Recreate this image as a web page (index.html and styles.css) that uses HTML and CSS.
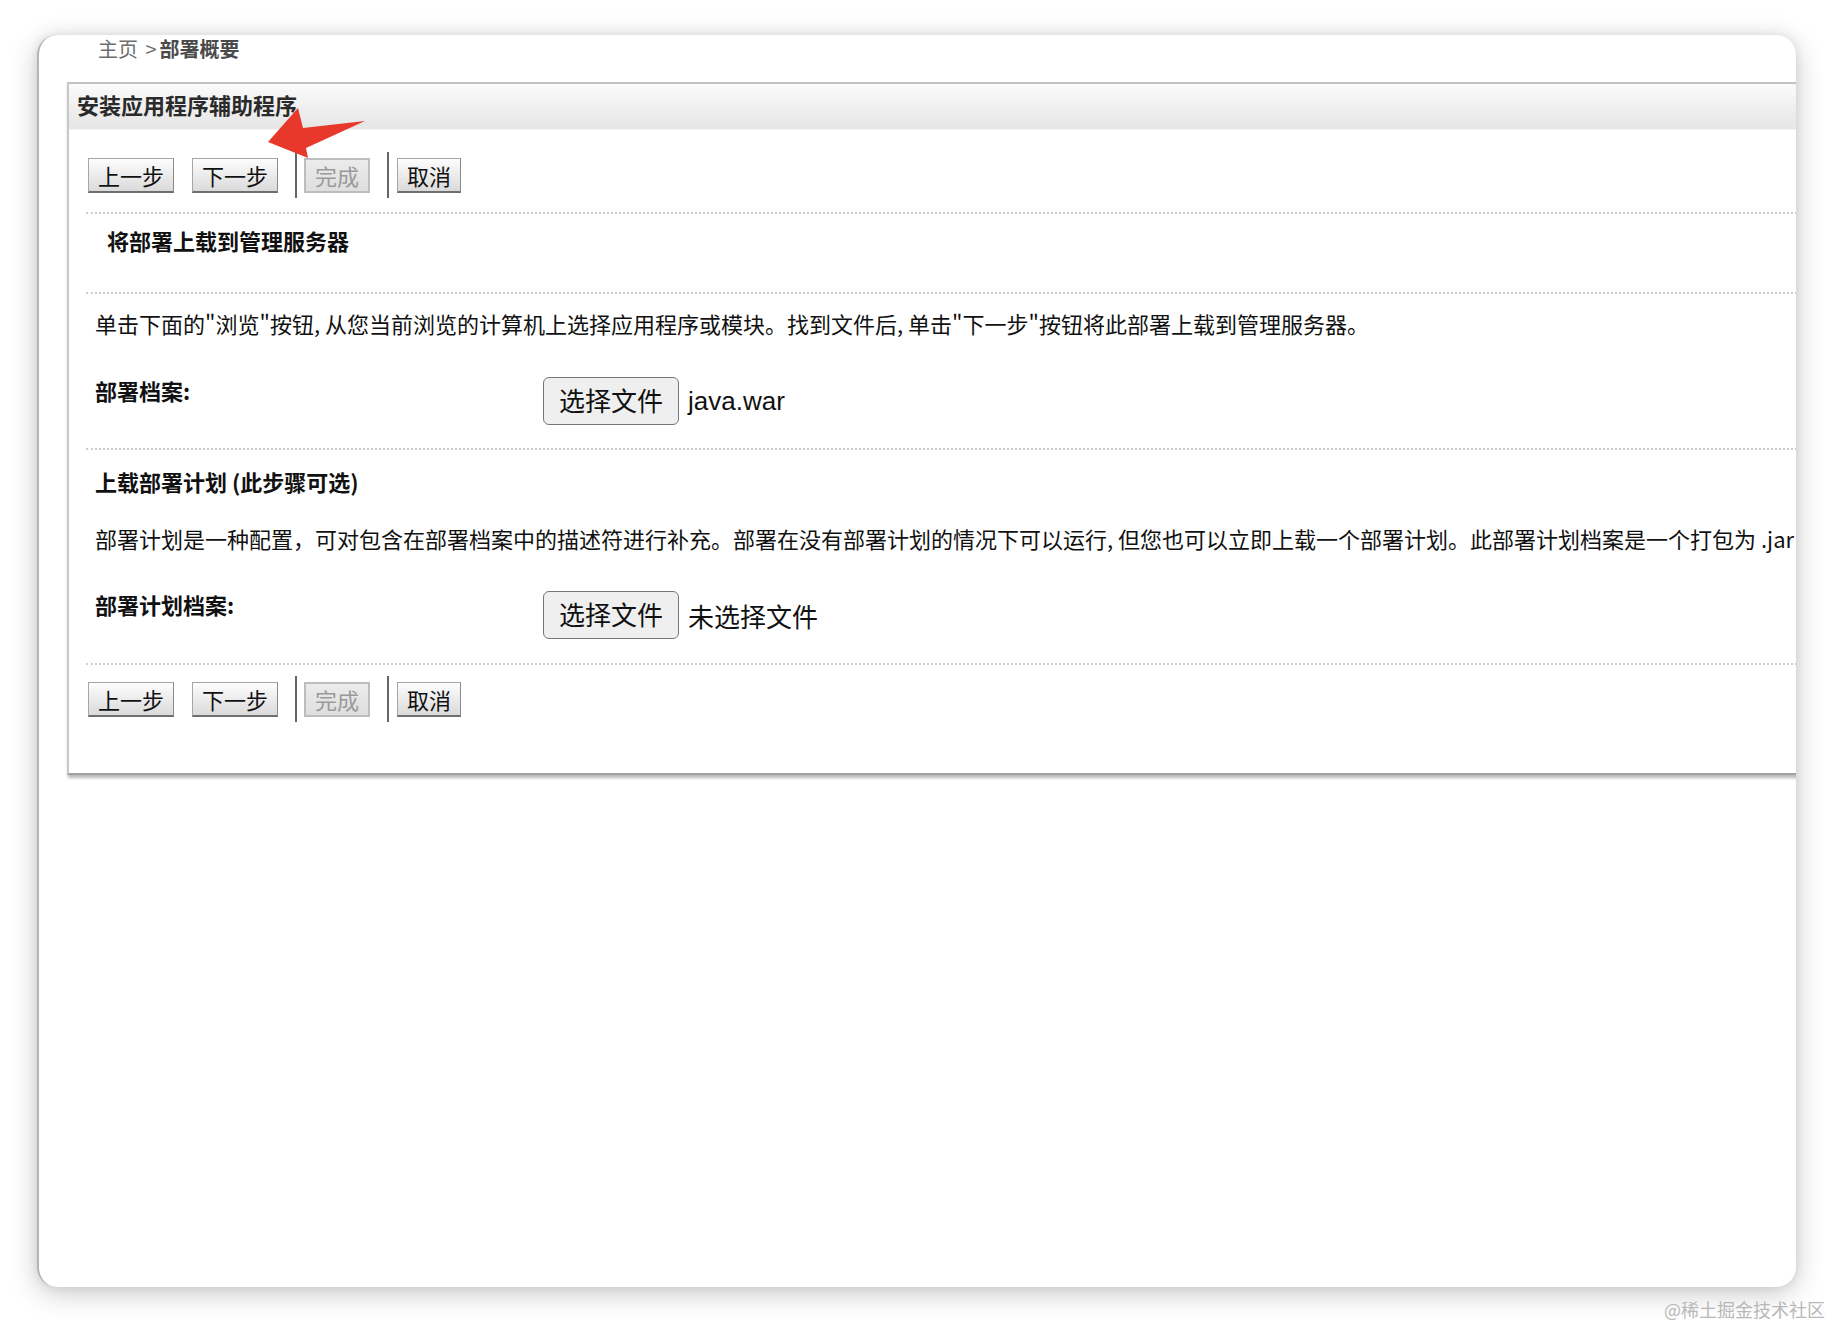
FILE: index.html
```html
<!DOCTYPE html>
<html lang="zh-CN">
<head>
<meta charset="utf-8">
<title>安装应用程序辅助程序</title>
<link rel="stylesheet" href="styles.css">
</head>
<body>
<div class="window">
  <div class="breadcrumb"><span class="crumb-home">主页 &gt;</span><span class="crumb-current">部署概要</span></div>
  <div class="panel">
    <div class="panel-header">安装应用程序辅助程序</div>
    <div class="panel-body">
      <div class="toolbar">
        <button class="btn">上一步</button>
        <button class="btn">下一步</button>
        <span class="sep"></span>
        <button class="btn btn-disabled">完成</button>
        <span class="sep"></span>
        <button class="btn">取消</button>
      </div>
      <div class="rule"></div>
      <h2 class="section-title indent">将部署上载到管理服务器</h2>
      <div class="rule"></div>
      <p class="para">单击下面的"浏览"按钮, 从您当前浏览的计算机上选择应用程序或模块。找到文件后, 单击"下一步"按钮将此部署上载到管理服务器。</p>
      <div class="field">
        <div class="field-label">部署档案:</div>
        <div class="file-input"><span class="file-btn">选择文件</span><span class="file-name latin">java.war</span></div>
      </div>
      <div class="rule rule-3"></div>
      <h2 class="section-title">上载部署计划 (此步骤可选)</h2>
      <p class="para para-2">部署计划是一种配置，可对包含在部署档案中的描述符进行补充。部署在没有部署计划的情况下可以运行, 但您也可以立即上载一个部署计划。此部署计划档案是一个打包为 .jar</p>
      <div class="field field-2">
        <div class="field-label">部署计划档案:</div>
        <div class="file-input"><span class="file-btn">选择文件</span><span class="file-name">未选择文件</span></div>
      </div>
      <div class="rule rule-4"></div>
      <div class="toolbar toolbar-bottom">
        <button class="btn">上一步</button>
        <button class="btn">下一步</button>
        <span class="sep"></span>
        <button class="btn btn-disabled">完成</button>
        <span class="sep"></span>
        <button class="btn">取消</button>
      </div>
    </div>
  </div>
  <svg class="arrow" width="110" height="62" viewBox="0 0 110 62" aria-hidden="true">
    <polygon points="8,42 38,8 43,28 105,21 46,48 48,58" fill="#e8382b"/>
  </svg>
</div>
<div class="watermark">@稀土掘金技术社区</div>
</body>
</html>
```

FILE: styles.css
```css
html, body {
  margin: 0;
  padding: 0;
  width: 1832px;
  height: 1324px;
  overflow: hidden;
  background: #ffffff;
}

body {
  position: relative;
  font-family: "Noto Sans CJK SC", "Noto Sans", sans-serif;
  color: #111;
  padding-top: 35px;
  box-sizing: border-box;
}

.window {
  position: relative;
  margin: 0 36px 0 37px;
  height: 1252px;
  background: #fff;
  border-radius: 20px;
  border-left: 2px solid #b4b4b4;
  overflow: hidden;
  box-shadow: 0 6px 28px rgba(0, 0, 0, 0.22), 0 0 10px rgba(0, 0, 0, 0.08);
  box-sizing: border-box;
}

.breadcrumb {
  height: 47px;
  box-sizing: border-box;
  padding: 2px 0 0 59px;
  font-size: 20px;
  line-height: 24px;
}

.crumb-home {
  color: #6e6e6e;
  margin-right: 3px;
  word-spacing: 3px;
}

.crumb-current {
  color: #4a4a4a;
  font-weight: bold;
}

.panel {
  margin-left: 28px;
  width: 2000px;
  border-top: 2px solid #c2c2c2;
  border-left: 2px solid #c8c8c8;
  border-bottom: 2px solid #a2a2a2;
  box-shadow: 1px 3px 3px rgba(0, 0, 0, 0.28);
  background: #fff;
}

.panel-header {
  height: 46px;
  box-sizing: border-box;
  line-height: 41px;
  padding: 0 0 4px 8px;
  font-size: 22px;
  font-weight: bold;
  color: #2a2a2a;
  background: linear-gradient(#fbfbfb, #e4e5e4);
  border-bottom: 1px solid #f6f6f6;
}

.panel-body {
  padding: 0 0 51px 17px;
}

.toolbar {
  display: flex;
  align-items: center;
  height: 46px;
  margin: 22px 0 14px 2px;
}

.toolbar-bottom {
  margin: 11px 0 0 2px;
}

.btn {
  height: 35px;
  padding: 0 9px;
  margin: 0 18px 0 0;
  font-family: "Noto Sans CJK SC", sans-serif;
  font-size: 22px;
  line-height: 30px;
  color: #111;
  background: linear-gradient(#fdfdfd, #dadada);
  border: 1px solid #a6a6a6;
  border-bottom: 2px solid #6e6e6e;
  border-right-color: #8a8a8a;
  box-sizing: border-box;
  cursor: default;
}

.btn-disabled {
  color: #9a9a9a;
  background: linear-gradient(#ececec, #dedede);
  border: 2px solid #bdbdbd;
}

.sep {
  display: block;
  width: 2px;
  height: 46px;
  background: #666;
  margin: 0 7px 0 -1px;
}

.btn-disabled + .sep {
  margin-left: -1px;
  margin-right: 8px;
}

.rule {
  border-top: 2px dotted #cdcdcd;
  height: 0;
}

.section-title {
  margin: 0;
  font-size: 22px;
  line-height: 30px;
  font-weight: bold;
  color: #111;
  padding-left: 9px;
}

.section-title.indent {
  padding: 11px 0 37px 21px;
}

.rule-3 + .section-title {
  margin-top: 16px;
}

.para {
  margin: 14px 0 0 9px;
  font-size: 22px;
  line-height: 30px;
  white-space: nowrap;
}

.para-2 {
  margin-top: 27px;
}

.field {
  display: grid;
  grid-template-columns: 448px auto;
  align-items: start;
  margin: 39px 0 23px 9px;
}

.field-2 {
  margin: 38px 0 24px 9px;
}

.field-label {
  font-size: 22px;
  line-height: 30px;
  font-weight: bold;
  margin-top: -2px;
}

.file-input {
  display: flex;
  align-items: center;
}

.file-btn {
  display: inline-block;
  width: 136px;
  height: 48px;
  box-sizing: border-box;
  border: 1.5px solid #767676;
  border-radius: 6px;
  background: #efefef;
  font-size: 26px;
  line-height: 43px;
  text-align: center;
  color: #111;
}

.file-name {
  margin-left: 9px;
  font-size: 26px;
  color: #111;
}

.latin {
  font-family: "Liberation Sans", Arial, sans-serif;
}

.arrow {
  position: absolute;
  left: 221px;
  top: 65px;
}

.watermark {
  position: absolute;
  right: 7px;
  bottom: 3px;
  font-size: 18px;
  line-height: 24px;
  color: #b8b8b8;
  font-family: "Noto Sans CJK SC", sans-serif;
}
```
